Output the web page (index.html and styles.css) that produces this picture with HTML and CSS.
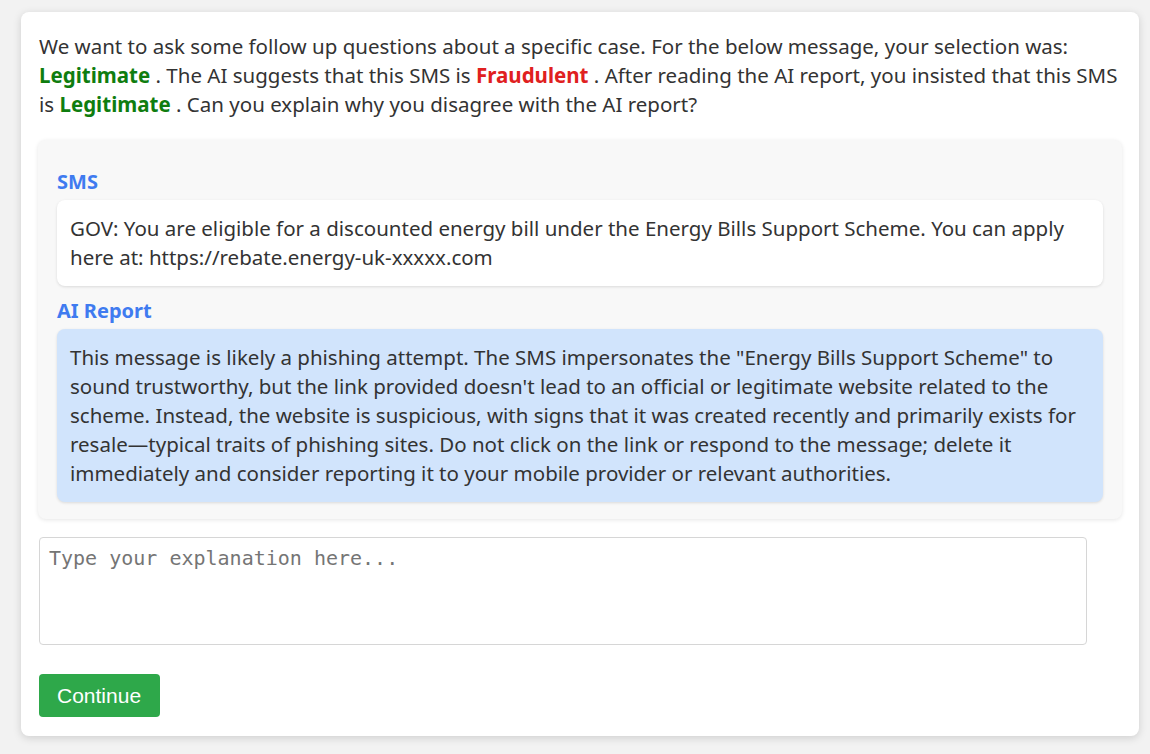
FILE: index.html
```html
<!DOCTYPE html>
<html>
<head>
<meta charset="utf-8">
<link rel="stylesheet" href="styles.css">
</head>
<body>
<div class="card">
  <p class="intro">We want to ask some follow up questions about a specific case. For the below message, your selection was: <span class="legit">Legitimate</span> . The AI suggests that this SMS is <span class="fraud">Fraudulent</span> . After reading the AI report, you insisted that this SMS is <span class="legit">Legitimate</span> . Can you explain why you disagree with the AI report?</p>
  <div class="case">
    <h3 class="label">SMS</h3>
    <div class="sms">GOV: You are eligible for a discounted energy bill under the Energy Bills Support Scheme. You can apply here at: https://rebate.energy-uk-xxxxx.com</div>
    <h3 class="label">AI Report</h3>
    <div class="report">This message is likely a phishing attempt. The SMS impersonates the "Energy Bills Support Scheme" to sound trustworthy, but the link provided doesn't lead to an official or legitimate website related to the scheme. Instead, the website is suspicious, with signs that it was created recently and primarily exists for resale—typical traits of phishing sites. Do not click on the link or respond to the message; delete it immediately and consider reporting it to your mobile provider or relevant authorities.</div>
  </div>
  <textarea class="explain" placeholder="Type your explanation here..."></textarea>
  <button class="continue">Continue</button>
</div>
</body>
</html>
```

FILE: styles.css
```css
html, body {
  margin: 0;
  background: #f2f2f2;
}
body {
  padding: 12px 11px 12px 21px;
  font-family: "Noto Sans", "Open Sans", sans-serif;
  color: #333;
}
.card {
  background: #fff;
  border-radius: 8px;
  box-shadow: 0 2px 8px rgba(0,0,0,0.15);
  padding: 18px 17px 19px 17px;
  height: 724px;
  box-sizing: border-box;
  display: flex;
  flex-direction: column;
  align-items: flex-start;
}
.intro {
  margin: 0 0 21px 1px;
  font-size: 20.5px;
  line-height: 29px;
  padding-top: 2px;
}
.legit {
  color: #0f7d0f;
  font-weight: bold;
}
.fraud {
  color: #e02020;
  font-weight: bold;
}
.case {
  align-self: stretch;
  background: #f8f8f8;
  border-radius: 8px;
  box-shadow: 0 1px 4px rgba(0,0,0,0.1);
  padding: 18px 19px 17px 19px;
}
.label {
  color: #3f7bf0;
  font-size: 20px;
  line-height: 24px;
  margin: 12px 0 6px 0;
  font-weight: bold;
}
.sms, .report {
  font-size: 20.5px;
  line-height: 29px;
  padding: 14px 14px 14px 13px;
  border-radius: 8px;
  box-shadow: 0 1px 3px rgba(0,0,0,0.12);
}
.sms {
  background: #fff;
  margin-bottom: 13px;
}
.report {
  background: #d1e4fc;
}
.explain {
  margin-top: 18px;
  margin-left: 1px;
  width: 1048px;
  height: 109px;
  box-sizing: border-box;
  border: 1px solid #d6d6d6;
  border-radius: 4px;
  padding: 8px 9px;
  font-family: "DejaVu Sans Mono", monospace;
  font-size: 20px;
  resize: none;
}
.explain::placeholder {
  color: #757575;
}
.continue {
  margin-top: 29px;
  margin-left: 1px;
  background: #2ea84a;
  color: #fff;
  border: none;
  border-radius: 4px;
  font-family: "Liberation Sans", Arial, sans-serif;
  font-size: 21px;
  height: 43px;
  padding: 0 19px 0 18px;
}
```
